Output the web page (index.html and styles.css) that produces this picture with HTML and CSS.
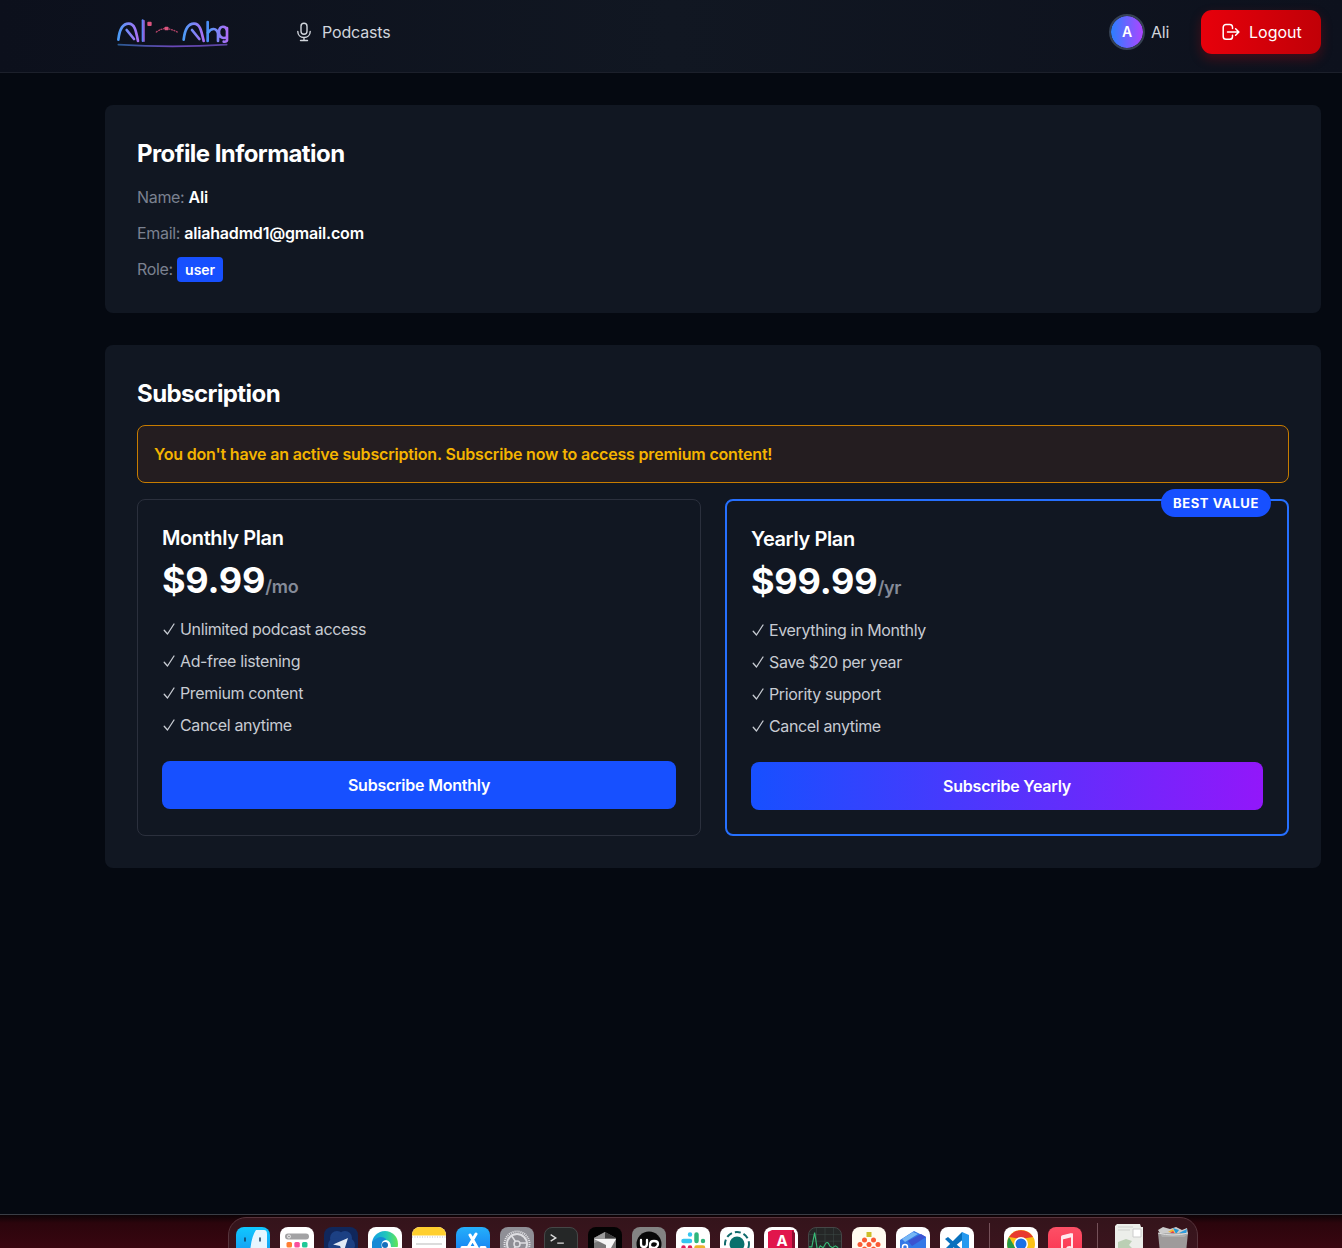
FILE: index.html
```html
<!DOCTYPE html>
<html lang="en">
<head>
<meta charset="utf-8">
<title>Profile</title>
<link rel="stylesheet" href="styles.css">
</head>
<body>
<header class="topbar">
  <svg class="logo" viewBox="48 42 348 108" fill="none" stroke-linecap="round" stroke-linejoin="round">
    <defs>
      <linearGradient id="a1" gradientUnits="userSpaceOnUse" x1="55" y1="0" x2="118" y2="0"><stop stop-color="#4b9cf8"/><stop offset="1" stop-color="#b06df5"/></linearGradient>
      <linearGradient id="a2" gradientUnits="userSpaceOnUse" x1="250" y1="0" x2="315" y2="0"><stop stop-color="#4b9cf8"/><stop offset="1" stop-color="#b06df5"/></linearGradient>
      <linearGradient id="a3" gradientUnits="userSpaceOnUse" x1="322" y1="0" x2="383" y2="0"><stop stop-color="#4b9cf8"/><stop offset="1" stop-color="#b06df5"/></linearGradient>
      <linearGradient id="a4" gradientUnits="userSpaceOnUse" x1="55" y1="0" x2="380" y2="0"><stop stop-color="#2b5a93"/><stop offset=".5" stop-color="#6a48b8"/><stop offset="1" stop-color="#5a45a0"/></linearGradient>
    </defs>
    <g stroke-width="8">
      <path stroke="url(#a1)" d="M55 119C58 92 68 71 86 71S108 92 114 123M80 90L102 117"/>
      <path stroke="#5c86f7" stroke-width="6" d="M128 61V123"/><path stroke="#b06df5" stroke-width="4" d="M132 62V124"/>
      <path stroke="url(#a2)" d="M251 119C254 92 264 71 282 71S304 92 311 123M276 90L298 117"/>
      <path stroke="#4b8ff8" d="M323 66V123"/>
      <path stroke="url(#a3)" d="M324 98C334 83 350 83 354 100V123M381 84V121Q380 126 371 125M381 92C378 76 359 76 357 94S368 117 381 112"/>
    </g>
    <rect x="142" y="65" width="13" height="13" rx="3" fill="#dc557f"/>
    <path d="M169 96Q184 85 199 86T232 96" stroke="#b04367" stroke-width="4" stroke-dasharray="3 5"/>
    <rect x="194" y="80" width="11" height="11" rx="2" fill="#dc557f"/>
    <path d="M55 134Q218 144 380 134" stroke="url(#a4)" stroke-width="5"/>
  </svg>
  <nav class="nav">
    <a class="nav-link">
      <svg class="mic" viewBox="0 0 16 20" fill="none" stroke="#d1d5dc" stroke-width="1.4" stroke-linecap="round"><rect x="5" y="1.3" width="6" height="11" rx="3"/><path d="M1.8 9.5c0 3.5 2.6 6 6.2 6s6.200-2.500 6.200-6M8 15.500v3M4.500 18.500h7"/></svg>
      <span>Podcasts</span>
    </a>
  </nav>
  <div class="account"><span class="avatar">A</span><span>Ali</span></div>
  <button class="logout">
    <svg class="exit" viewBox="0 0 18 18" fill="none" stroke="#fff" stroke-width="1.500" stroke-linecap="round" stroke-linejoin="round"><path d="M10.500 5.500V4A2.800 2.800 0 0 0 7.700 1.500H4A2.800 2.800 0 0 0 1.200 4.300v9.200A2.800 2.800 0 0 0 4 16.300h3.700a2.800 2.800 0 0 0 2.800-2.500v-1.500M5.500 9H16.800M13.600 5.700L16.900 9l-3.300 3.300"/></svg>
    <span>Logout</span>
  </button>
</header>

<main class="content">
  <section class="panel profile">
    <h2>Profile Information</h2>
    <p class="field">Name: <strong class="name">Ali</strong></p>
    <p class="field">Email: <strong class="email">aliahadmd1@gmail.com</strong></p>
    <p class="field">Role: <span class="role">user</span></p>
  </section>
  <section class="panel">
    <h2 class="sub-title">Subscription</h2>
    <p class="notice">You don't have an active subscription. Subscribe now to access premium content!</p>
    <div class="plans">
      <article class="plan">
        <h3>Monthly Plan</h3>
        <p class="price">$9.99<small>/mo</small></p>
        <ul>
          <li><svg class="check" viewBox="0 0 12 14"><path d="M1.200 8.200L4.500 12 11 2"/></svg>Unlimited podcast access</li>
          <li><svg class="check" viewBox="0 0 12 14"><path d="M1.200 8.200L4.500 12 11 2"/></svg>Ad-free listening</li>
          <li><svg class="check" viewBox="0 0 12 14"><path d="M1.200 8.200L4.500 12 11 2"/></svg>Premium content</li>
          <li><svg class="check" viewBox="0 0 12 14"><path d="M1.200 8.200L4.500 12 11 2"/></svg>Cancel anytime</li>
        </ul>
        <button class="subscribe">Subscribe Monthly</button>
      </article>
      <article class="plan best">
        <span class="badge">BEST VALUE</span>
        <h3>Yearly Plan</h3>
        <p class="price">$99.99<small>/yr</small></p>
        <ul>
          <li><svg class="check" viewBox="0 0 12 14"><path d="M1.200 8.200L4.500 12 11 2"/></svg>Everything in Monthly</li>
          <li><svg class="check" viewBox="0 0 12 14"><path d="M1.200 8.200L4.500 12 11 2"/></svg>Save $20 per year</li>
          <li><svg class="check" viewBox="0 0 12 14"><path d="M1.200 8.200L4.500 12 11 2"/></svg>Priority support</li>
          <li><svg class="check" viewBox="0 0 12 14"><path d="M1.200 8.200L4.500 12 11 2"/></svg>Cancel anytime</li>
        </ul>
        <button class="subscribe yearly">Subscribe Yearly</button>
      </article>
    </div>
  </section>
</main>

<footer class="desktop">
  <div class="dock">
    <svg class="app finder" viewBox="0 0 34 34"><path d="M20 3h8q3 0 3 4v27H19v-8h-5Q15 10 20 3z" fill="#e6f6ff"/><path d="M9 11v3M24 11v3" stroke="#123a5c" stroke-width="1.500" stroke-linecap="round"/></svg>
    <svg class="app white" viewBox="0 0 34 34"><rect x="5" y="6.500" width="24" height="6" rx="3" fill="#a2a2a4"/><circle cx="9" cy="9.500" r="1.500" fill="none" stroke="#eee"/><rect x="6.500" y="15" width="5.500" height="5.500" rx="1.500" fill="#ff7f32"/><rect x="14.300" y="15" width="5.500" height="5.500" rx="1.500" fill="#fa4d9c"/><rect x="22" y="15" width="5.500" height="5.500" rx="1.500" fill="#1dc997"/></svg>
    <svg class="app navy" viewBox="0 0 34 34"><g fill="#204a91" opacity=".75"><circle cx="13" cy="11" r="7"/><circle cx="21" cy="11" r="7"/><circle cx="11" cy="18" r="7"/><circle cx="24" cy="18" r="7"/></g><path d="M9 17.500L24 11l-5 16-3-8z" fill="#e2eaf5"/></svg>
    <svg class="app white" viewBox="0 0 34 34"><defs><linearGradient id="edge" x2="1"><stop stop-color="#129de5"/><stop offset=".55" stop-color="#22c7ba"/><stop offset="1" stop-color="#62e653"/></linearGradient></defs><circle cx="17" cy="17" r="13" fill="url(#edge)"/><path d="M4 15q8-8 14-3l-4 12H4z" fill="#1689d5"/><path d="M14 21q-2-7 4-8 5 1 5 7h7v14H16z" fill="#fff"/><circle cx="17" cy="18" r="3" fill="#176fbc"/></svg>
    <svg class="app white" viewBox="0 0 34 34"><path d="M0 0h34v8.500H0z" fill="#ffcf2e"/><path d="M0 10h34" stroke="#bbb" stroke-dasharray="1 1.500"/><path d="M4 17h26" stroke="#d0d0d0" stroke-width="1.500"/></svg>
    <svg class="app store" viewBox="0 0 34 34" fill="none" stroke="#fff" stroke-width="3" stroke-linecap="round"><path d="M14 8l9 16M20 7L10 24M6 20.500h13M25 20.500h4"/></svg>
    <svg class="app settings" viewBox="0 0 34 34" fill="none" stroke="#dedee2"><circle cx="17" cy="17" r="12.500" stroke-width="2" stroke-dasharray="1.100 .9"/><circle cx="17" cy="17" r="10" stroke-width="2"/><circle cx="17" cy="17" r="3" stroke-width="1.500"/><path d="M19.500 16H27M15.500 14.500L11 8M15.500 19.500L11 26" stroke-width="1.500"/></svg>
    <svg class="app dark" viewBox="0 0 34 34" fill="none" stroke="#ddd" stroke-width="1.400"><path d="M6 7l5.500 3.500L6 14M13 16h7"/></svg>
    <svg class="app black" viewBox="0 0 34 34"><path d="M17 5l11 6v17H6V11z" fill="#777"/><path d="M17 5l11 6H6z" fill="#3e3e3e"/><path d="M17 5v7L6 16v-5z" fill="#9a9a9a"/><path d="M6 12h22L18 30v-12z" fill="#f5f5f5"/></svg>
    <svg class="app gray" viewBox="0 0 34 34" fill="none" stroke="#fff" stroke-width="2.300"><circle cx="17" cy="17" r="12.500" fill="#080808" stroke="none"/><path d="M9 13v4q0 3 3 3t3-4v-3M18 25v-7q0-4 4-4t4 3-4 4q-3 0-4-2" stroke-linecap="round"/></svg>
    <svg class="app white" viewBox="0 0 34 34" fill="none" stroke-width="4.500" stroke-linecap="round"><path d="M14 7.500v0M7.500 14H14" stroke="#36c5f0"/><path d="M20.500 7.500V14M27 14v0" stroke="#2eb67d"/><path d="M7.500 20.500v0M14 20.500V27" stroke="#e01e5a"/><path d="M20.500 20.500H27" stroke="#ecb22e"/></svg>
    <svg class="app white" viewBox="0 0 34 34" fill="none" stroke="#116b6d"><circle cx="17" cy="17" r="12" stroke-width="2" stroke-dasharray="6 3"/><circle cx="17" cy="17" r="7.500" fill="#09716d" stroke="none"/></svg>
    <svg class="app white" viewBox="0 0 34 34"><path d="M4 5l4-2h22v26H4z" fill="#e1164c"/><path d="M28 3l3 3v28h-3z" fill="#8d0e31"/><text class="glyph" x="18" y="18.500" text-anchor="middle">A</text></svg>
    <svg class="app dark" viewBox="0 0 34 34" fill="none"><path d="M0 7h34M0 14h34M8 0v34M17 0v34M26 0v34" stroke="#40504a" stroke-width=".5"/><path d="M0 20h3l3-15 3 19 3-5 3 2 3-5q2-2 4 3l3 2 3-2 3 2" stroke="#39bd78" stroke-width="1.200"/></svg>
    <svg class="app cream" viewBox="0 0 34 34"><path d="M14.500 5h5v5h-5z" fill="#cdbd28"/><g fill="#fa5934"><circle cx="12.500" cy="13" r="2.500"/><circle cx="21.500" cy="13" r="2.500"/><circle cx="8" cy="17.500" r="2.500"/><circle cx="17" cy="17.500" r="2.500"/><circle cx="26" cy="17.500" r="2.500"/><circle cx="12.500" cy="22" r="2.500"/><circle cx="21.500" cy="22" r="2.500"/></g></svg>
    <svg class="app white" viewBox="0 0 34 34"><path d="M4 13l14-9 12 6v15l-12 8L4 24z" fill="#3478e6"/><path d="M6 12l11-7 5 2-13 8z" fill="#76b7f5"/><path d="M12 14l13-7 5 3-14 9z" fill="#3b53d1"/><circle cx="9" cy="20" r="2.500" fill="none" stroke="#fff" stroke-width="1.500"/></svg>
    <svg class="app white" viewBox="0 0 34 34"><path d="M5 12l3-2 16 14v6zM5 22l17-17 4 5-18 15z" fill="#0870bd"/><path d="M22 5l7 3v20l-7 3z" fill="#2599ef"/></svg>
    <span class="divider"></span>
    <svg class="app white" viewBox="0 0 34 34"><circle cx="17" cy="17" r="14" fill="#fbc116"/><path d="M5 10A14 14 0 0 1 29 10L17 12z" fill="#e83a2f"/><path d="M5 10l7 12 5 9A14 14 0 0 1 5 10" fill="#259b48"/><circle cx="17" cy="17" r="7" fill="#fff"/><circle cx="17" cy="17" r="5.500" fill="#1b70e5"/></svg>
    <svg class="app music" viewBox="0 0 34 34" fill="none" stroke="#ffe8ed" stroke-width="2"><path d="M14 25V10l10-2.500V22"/><path d="M14 10.500l10-2.500" stroke-width="4"/><ellipse cx="11.500" cy="25" rx="3" ry="2" fill="#fff"/><ellipse cx="21.500" cy="22" rx="2.500" ry="2" fill="#fff"/></svg>
    <span class="divider"></span>
    <svg class="file" viewBox="0 0 28 36"><path d="M2 0h23l1 3h2v33H0V2z" fill="#eceeea"/><path d="M3 3h15M3 6h12" stroke="#cfd1ce"/><path d="M18 5h8v8h-8z" fill="#fff" stroke="#ccc"/><path d="M3 18l8-3 6 2-3 4 5 5H3z" fill="#bbcfb4"/></svg>
    <svg class="trash" viewBox="0 0 32 36"><path d="M1 4l5-3 7 2 6-2 6 3 5-2 1 6-4 3H5z" fill="#ccc"/><path d="M11 6l5-3 2 4z" fill="#f4b62c"/><path d="M16 2l6 2-3 4z" fill="#239bd6"/><path d="M22 7l8-4-1 6z" fill="#2d9bdc"/><path d="M13 7l3-2 2 3z" fill="#df3c57"/><path d="M1 7h30l-3 29H4z" fill="#aaa" opacity=".9"/><path d="M1 7q15 4 30 0" fill="none" stroke="#ddd"/></svg>
  </div>
</footer>
</body>
</html>
```
FILE: styles.css
```css
* { box-sizing: border-box; }
body { margin: 0; height: 1248px; display: flex; flex-direction: column; overflow: hidden; background: #050911; color: #fff; font: 400 16px/24px Inter, "Liberation Sans", sans-serif; }
h2, h3, p, ul { margin: 0; padding: 0; }
button { border: 0; color: #fff; font: inherit; }
.topbar { height: 73px; flex: none; display: flex; align-items: center; padding: 0 21px 8px 116px; border-bottom: 1px solid #1c202b; background: linear-gradient(90deg, #0c101c, #111722 50%, #0d111d); color: #d1d5dc; letter-spacing: -.17px; }
.logo { width: 116px; height: 36px; flex: none; }
.nav { flex: 1; padding-left: 64px; }
.nav-link { display: flex; align-items: center; gap: 10px; }
.mic { width: 16px; height: 20px; }
.account { display: flex; align-items: center; gap: 6px; margin-right: 32px; letter-spacing: -.3px; }
.avatar { width: 36px; height: 36px; border: 2px solid #364153; border-radius: 50%; display: grid; place-items: center; background: linear-gradient(90deg, #2b7fff, #ad46ff); background-clip: padding-box; color: #fff; font-size: 14px; font-weight: 600; letter-spacing: 0; }
.logout { width: 120px; height: 44px; border-radius: 11px; display: flex; align-items: center; gap: 9px; padding: 0 0 0 21px; background: linear-gradient(90deg, #e7000b, #c10007); box-shadow: 0 5px 12px rgba(231, 0, 11, .25); }
.exit { width: 18px; height: 18px; }
.content { flex: 1; padding: 32px 21px 0 105px; display: flex; flex-direction: column; gap: 32px; }
.panel { padding: 32px; border-radius: 8px; background: #111722; }
h2 { padding-top: 1px; font-size: 24px; line-height: 31px; font-weight: 660; letter-spacing: -.57px; }
.profile { height: 208px; }
.field { color: #7b8190; line-height: 24px; margin-top: 12px; letter-spacing: -.32px; }
.field strong { color: #fff; font-weight: 600; letter-spacing: -.19px; }
h2 + .field { margin-top: 16px; }
.role { display: inline-block; height: 25px; line-height: 25px; padding: 0 8px; border-radius: 4px; background: #1750ff; color: #fff; font-size: 14px; font-weight: 600; letter-spacing: 0; }
.notice { height: 58px; margin: 16px 0; padding: 16px; border: 1px solid #c77c00; border-radius: 8px; background: #241d20; color: #f4b400; font-weight: 600; letter-spacing: -.178px; }
.plans { display: grid; grid-template-columns: 1fr 1fr; gap: 24px; }
.plan { height: 337px; position: relative; padding: 24px; border: 1px solid #2b303d; border-radius: 8px; }
.best { border: 2px solid #2670ff; }
h3 { font-size: 20px; line-height: 28px; font-weight: 640; letter-spacing: -.4px; }
.price { margin-top: 8px; font-size: 36px; line-height: 40px; font-weight: 700; letter-spacing: -.2px; }
.price small { font-size: 18px; color: #858b99; font-weight: 600; letter-spacing: -.3px; }
ul { list-style: none; margin-top: 10px; display: grid; gap: 8px; color: #c7cbd2; letter-spacing: -.36px; }
li { display: flex; align-items: center; gap: 5px; }
.check { width: 12px; height: 14px; margin-left: 1px; fill: none; stroke: currentColor; stroke-width: 1.3; stroke-linecap: round; stroke-linejoin: round; }
.subscribe { display: block; width: 100%; height: 48px; margin-top: 24px; border-radius: 8px; background: #1750ff; font-weight: 600; letter-spacing: -.22px; }
.yearly { background: linear-gradient(90deg, #1750ff, #9217fa); }
.badge { position: absolute; top: -12px; right: 16px; width: 110px; height: 28px; border-radius: 14px; background: #1750ff; display: grid; place-items: center; font-size: 13px; font-weight: 700; letter-spacing: .6px; }
.desktop { flex: none; height: 34px; overflow: hidden; padding: 2px 144px 0 228px; border-top: 1px solid #3a3d45; background: linear-gradient(#0c0306 0, #2b050c 8px, #390610); }
.dock { height: 60px; display: flex; align-items: flex-start; padding: 9px 8px 0 7px; gap: 10px; border: 1px solid #56343c; border-radius: 18px 18px 0 0; background: linear-gradient(#34141b, #421520); }
.app { width: 34px; height: 34px; flex: none; border-radius: 8px; }
.finder { background: linear-gradient(#10c8ff, #158fee); }
.white { background: #fff; }
.navy { background: #10275b; }
.store { background: linear-gradient(#25b0fb, #126fee); }
.settings { background: #8f8f96; }
.dark { background: #252727; border: 1px solid #454747; }
.black { background: #030303; }
.gray { background: #838383; }
.cream { background: #fffaf0; }
.music { background: linear-gradient(#fc5066, #fb304d); }
.glyph { font: 700 15px Inter, sans-serif; fill: #fff; }
.divider { width: 1px; height: 40px; margin: -4px 4px 0 5px; background: #755159; }
.file { width: 28px; height: 36px; margin: -3px 3px 0 3px; }
.trash { width: 32px; height: 36px; margin: -1px 0 0 1px; }
```
